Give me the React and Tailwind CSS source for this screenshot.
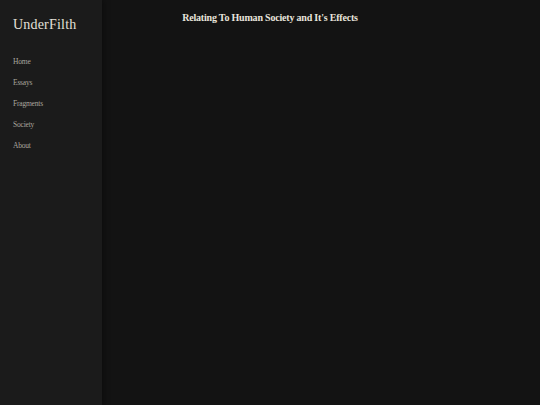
export default function App() {
  const links = ['Home', 'Essays', 'Fragments', 'Society', 'About']

  return (
    <div className="flex h-[405px] w-full overflow-hidden bg-[#131313]" style={{ fontFamily: '"Liberation Serif", "DejaVu Serif", serif' }}>
      {/* Sidebar */}
      <aside className="w-[102px] shrink-0 bg-[#1b1b1b] shadow-[2px_0_6px_rgba(0,0,0,0.35)] pl-[13px]">
        <div className="pt-[16px] text-[14px] leading-[17px] tracking-[0.2px] text-[#e4e0d8]">UnderFilth</div>
        <nav className="mt-[23px] flex flex-col gap-[10px]">
          {links.map(l => (
            <span key={l} className="text-[7.5px] leading-[11px] tracking-[-0.2px] text-[#aaa69f]">{l}</span>
          ))}
        </nav>
      </aside>

      {/* Main */}
      <main className="flex-1">
        <div className="pt-[11px] pr-[102px] text-center">
          <h1 className="text-[10px] leading-[13px] font-bold tracking-[-0.2px] text-[#e8e4dc]">Relating To Human Society and It's Effects</h1>
        </div>
      </main>
    </div>
  )
}
